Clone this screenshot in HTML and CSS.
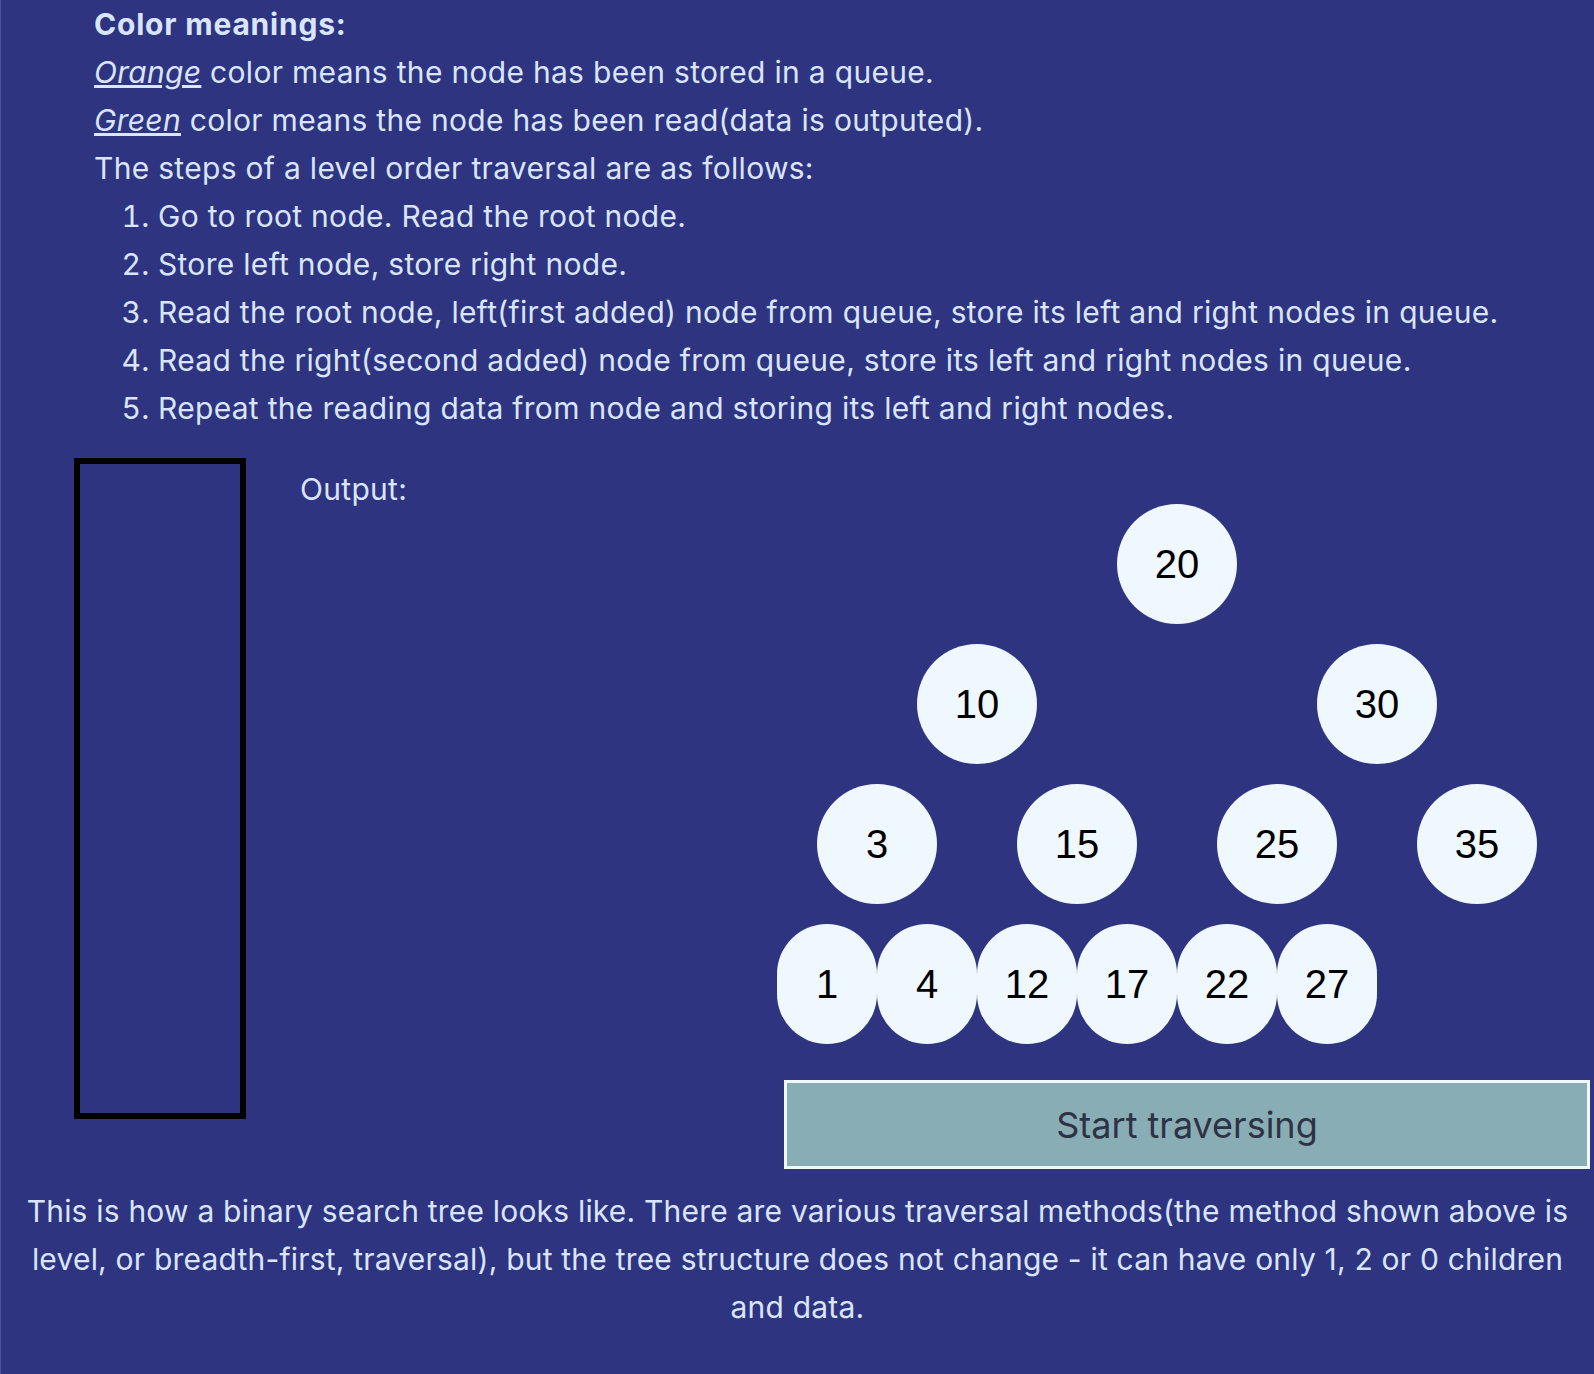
FILE: index.html
```html
<!DOCTYPE html>
<html lang="en">
<head>
    <meta charset="UTF-8">
    <meta name="viewport" content="width=device-width, initial-scale=1.0">
    <title>Level order traversal</title>
    <link rel="stylesheet" href="styles.css">
</head>
<body>
    <main id="page">
        <section id="legend">
            <p class="title">Color meanings:</p>
            <p><span class="mark">Orange</span> color means the node has been stored in a queue.</p>
            <p><span class="mark">Green</span> color means the node has been read(data is outputed).</p>
            <p>The steps of a level order traversal are as follows:</p>
            <ol>
                <li>Go to root node. Read the root node.</li>
                <li>Store left node, store right node.</li>
                <li>Read the root node, left(first added) node from queue, store its left and right nodes in queue.</li>
                <li>Read the right(second added) node from queue, store its left and right nodes in queue.</li>
                <li>Repeat the reading data from node and storing its left and right nodes.</li>
            </ol>
        </section>
        <section id="stage">
            <div id="queue"></div>
            <div id="output">
                <p>Output:</p>
            </div>
            <div id="treebox">
                <div id="tree">
                    <div class="level lv1">
                        <div class="node">20</div>
                    </div>
                    <div class="level lv2">
                        <div class="node">10</div>
                        <div class="node">30</div>
                    </div>
                    <div class="level lv3">
                        <div class="node">3</div>
                        <div class="node">15</div>
                        <div class="node">25</div>
                        <div class="node">35</div>
                    </div>
                    <div class="level lv4">
                        <div class="node leaf">1</div>
                        <div class="node leaf">4</div>
                        <div class="node leaf">12</div>
                        <div class="node leaf">17</div>
                        <div class="node leaf">22</div>
                        <div class="node leaf">27</div>
                    </div>
                </div>
                <button id="start" type="button">Start traversing</button>
            </div>
        </section>
        <p id="about">This is how a binary search tree looks like. There are various traversal methods(the method shown above is level, or breadth-first, traversal), but the tree structure does not change - it can have only 1, 2 or 0 children and data.</p>
    </main>
</body>
</html>
```

FILE: styles.css
```css
html{
    background-color: #2f3480;
}

body{
    margin: 0;
    padding: 0;
}

#page{
    min-height: 1374px;
    border-left: 1px solid #50559a;
    color: #d9e5fd;
    font-family: Inter, "Noto Sans", sans-serif;
    font-size: 30px;
    line-height: 48px;
    letter-spacing: 0.3px;
}

p{
    margin: 0;
}

#legend{
    padding-left: 93px;
}

.title{
    font-weight: 700;
    letter-spacing: 0.8px;
}

.mark{
    font-style: italic;
    text-decoration: underline;
}

ol{
    margin: 0;
    padding-left: 64px;
}

#stage{
    display: flex;
    margin-top: 26px;
}

#queue{
    width: 160px;
    height: 649px;
    margin-left: 73px;
    border: 6px solid #000;
}

#output{
    flex: 1;
    margin-left: 54px;
    padding-top: 7px;
}

#treebox{
    width: 817px;
    padding-top: 46px;
}

#tree{
    width: 800px;
    display: flex;
    flex-direction: column;
    gap: 20px;
}

.level{
    display: grid;
    justify-items: center;
}

.lv1{
    grid-template-columns: repeat(1, 1fr);
}

.lv2{
    grid-template-columns: repeat(2, 1fr);
}

.lv3{
    grid-template-columns: repeat(4, 1fr);
}

.lv4{
    grid-template-columns: repeat(8, 1fr);
}

.node{
    width: 120px;
    height: 120px;
    border-radius: 60px;
    background-color: #f0f8ff;
    color: #000;
    display: flex;
    justify-content: center;
    align-items: center;
    font-family: "Liberation Sans", Arial, sans-serif;
    font-size: 40px;
    letter-spacing: 0;
}

.leaf{
    width: 100px;
}

#start{
    display: block;
    width: 806px;
    height: 89px;
    margin-top: 36px;
    margin-left: 7px;
    border: 3px solid #f0f8ff;
    background-color: #89adb4;
    color: #2f3244;
    font-family: Inter, "Noto Sans", sans-serif;
    font-size: 36px;
}

#about{
    margin-top: 18px;
    padding: 0 20px;
    text-align: center;
    letter-spacing: 0.2px;
}
```
